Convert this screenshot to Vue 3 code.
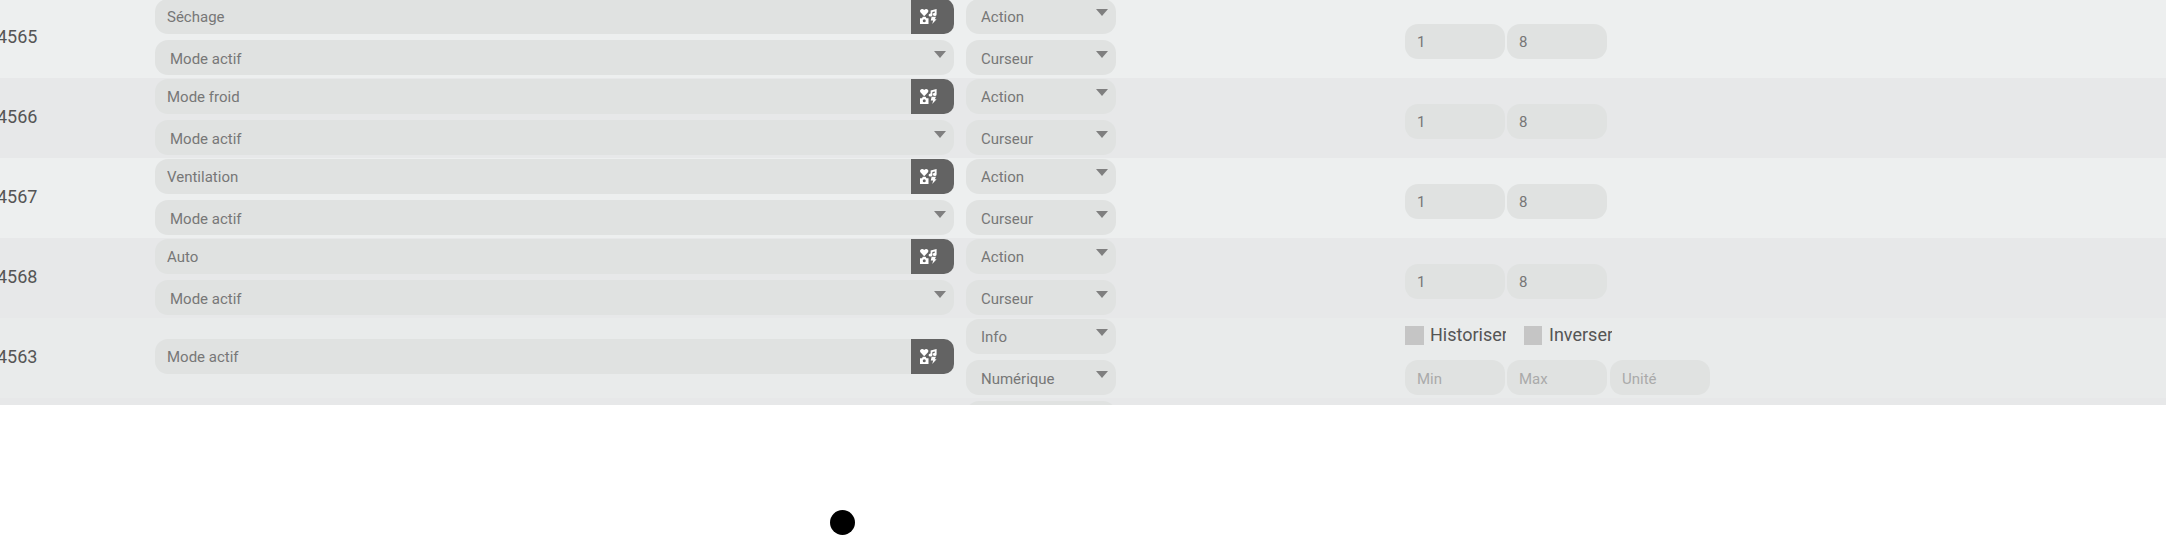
<script setup>
const rows = [
  { id: 4565, name: 'Séchage', type: 'Action', sub: 'Curseur' },
  { id: 4566, name: 'Mode froid', type: 'Action', sub: 'Curseur' },
  { id: 4567, name: 'Ventilation', type: 'Action', sub: 'Curseur' },
  { id: 4568, name: 'Auto', type: 'Action', sub: 'Curseur' },
  { id: 4563, name: 'Mode actif', type: 'Info', sub: 'Numérique', info: true },
]
</script>

<template>
  <div class="page">
    <div class="table">
      <div v-for="(r, i) in rows" :key="r.id" class="row" :class="{ even: i % 2 === 1, last: r.info }">
        <div class="id">{{ r.id }}</div>
        <div class="name-col" :class="{ center: r.info }">
          <div class="group">
            <input class="field name" :value="r.name" readonly />
            <button class="icon-btn" type="button" aria-label="Icône">
              <svg width="17" height="15" viewBox="0 0 17 15" fill="#fff">
                <path d="M4.2 7.2 L0.6 3.6 C-0.6 2.2 0.2 0 2.1 0 C3 0 3.7 0.4 4.2 1.1 C4.7 0.4 5.4 0 6.3 0 C8.2 0 9 2.2 7.8 3.6 Z" />
                <path d="M10.6 1.4 L16.6 0 V5.4 A1.9 1.6 0 1 1 14.8 3.8 V2.4 L12.4 3 V6 A1.9 1.6 0 1 1 10.6 4.4 Z" />
                <path fill-rule="evenodd" d="M0 9.2 H2 L2.8 7.8 H5.6 L6.4 9.2 H8.5 V15 H0 Z M4.25 10.3 A1.5 1.5 0 1 0 4.25 13.3 A1.5 1.5 0 1 0 4.25 10.3 Z" />
                <path d="M11.6 7.8 H16 L14.8 10.2 H16.6 L12.2 15 L13.2 11.6 H10.8 Z" />
              </svg>
            </button>
          </div>
          <div v-if="!r.info" class="sel sel-wide">
            <select class="field"><option>Mode actif</option></select>
          </div>
        </div>
        <div class="type-col">
          <div class="sel sel-type"><select class="field"><option>{{ r.type }}</option></select></div>
          <div class="sel sel-type"><select class="field"><option>{{ r.sub }}</option></select></div>
          <div v-if="r.info" class="sel sel-type"><select class="field"><option></option></select></div>
        </div>
        <div class="cfg-col" :class="{ stack: r.info }">
          <template v-if="r.info">
            <div class="checks">
              <label class="check c1"><span class="box"></span><span class="lbl">Historiser</span></label>
              <label class="check c2"><span class="box"></span><span class="lbl">Inverser</span></label>
            </div>
            <div class="nums">
              <input class="field num ph" placeholder="Min" />
              <input class="field num ph" placeholder="Max" />
              <input class="field num ph unit" placeholder="Unité" />
            </div>
          </template>
          <div v-else class="nums">
            <input class="field num" value="1" readonly />
            <input class="field num" value="8" readonly />
          </div>
        </div>
      </div>
      <div class="row even"></div>
    </div>
    <span class="dot"></span>
  </div>
</template>

<style>
html, body { margin: 0; background: #fff; }
</style>

<style scoped>
.page {
  position: relative;
  width: 2166px;
  height: 536px;
  overflow: hidden;
  font-family: Roboto, sans-serif;
}
.table {
  height: 405px;
  overflow: hidden;
}
.row {
  display: flex;
  height: 80px;
  background: #edefef;
}
.row:first-child { margin-top: -2px; }
.row.even { background: #e7e8e9; }
.row.last { background: #e9ebeb; }
.id {
  width: 155px;
  flex: none;
  margin-left: -3px;
  margin-right: 3px;
  line-height: 78px;
  font-size: 18px;
  color: #555;
}
.name-col {
  width: 799px;
  flex: none;
  padding-top: 1px;
  display: flex;
  flex-direction: column;
  gap: 6px;
}
.name-col.center { padding-top: 21px; }
.group { display: flex; }
.field {
  display: block;
  box-sizing: border-box;
  width: 100%;
  height: 35px;
  margin: 0;
  border: 0;
  outline: 0;
  border-radius: 13px;
  background: #e0e2e1;
  color: #777;
  font: 15px Roboto, sans-serif;
  padding: 0 12px;
  appearance: none;
}
.field::placeholder { color: #aaa; opacity: 1; }
select.field { padding: 3px 15px 0; }
.sel-type:first-child select.field { padding-top: 1px; }
.ph { padding-top: 2px; }
.name { flex: 1; min-width: 0; border-radius: 13px 0 0 13px; }
.icon-btn {
  flex: none;
  width: 43px;
  height: 35px;
  padding: 0 8px 0 0;
  border: 0;
  border-radius: 0 10px 10px 0;
  background: #636363;
  display: flex;
  align-items: center;
  justify-content: center;
}
.sel { position: relative; }
.sel::after {
  content: "";
  position: absolute;
  top: 11px;
  right: 8px;
  border-style: solid;
  border-width: 7px 6.5px 0;
  border-color: #7f7f7f transparent transparent;
  pointer-events: none;
}
.type-col {
  width: 150px;
  flex: none;
  margin-left: 12px;
  padding-top: 1px;
  display: flex;
  flex-direction: column;
  gap: 6px;
}
.sel-type:first-child::after { top: 10px; }
.cfg-col {
  margin-left: 289px;
  padding-top: 26px;
}
.cfg-col.stack { padding-top: 8px; }
.nums { display: flex; gap: 2px; }
.num { width: 100px; flex: none; }
.num.unit { margin-left: 1px; }
.checks {
  display: flex;
  height: 19px;
  margin-bottom: 15px;
  font-size: 18px;
  line-height: 19px;
  color: #555;
}
.check { display: flex; align-items: center; overflow: hidden; white-space: nowrap; }
.lbl { margin-bottom: 2px; }
.c1 { width: 101px; margin-right: 18px; }
.c2 { width: 88px; }
.box {
  width: 19px;
  height: 19px;
  flex: none;
  margin-right: 6px;
  background: #c5c5c5;
}
.c2 .box { width: 18px; margin-right: 7px; }
.dot {
  position: absolute;
  left: 830px;
  top: 510px;
  width: 25px;
  height: 25px;
  border-radius: 50%;
  background: #000;
}
</style>
